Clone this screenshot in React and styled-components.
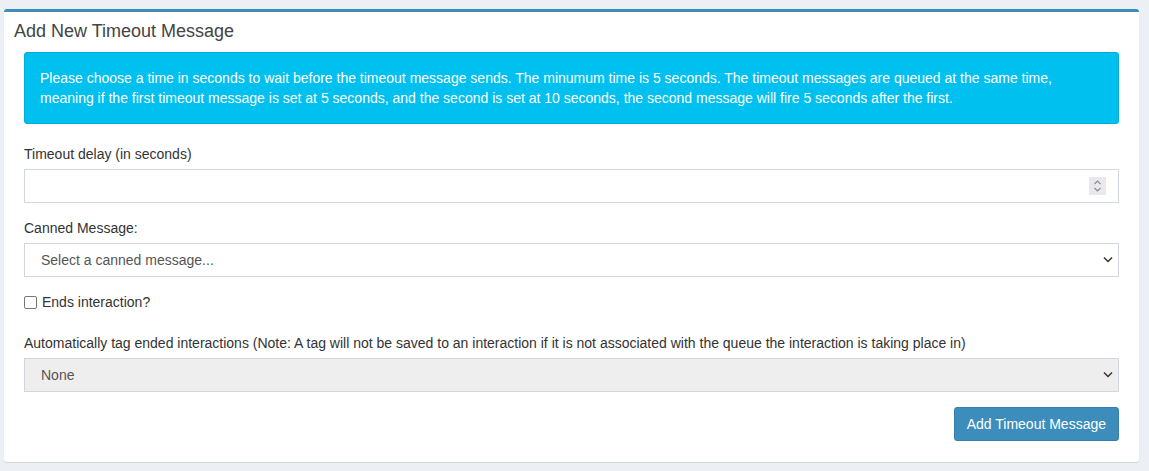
import React, { useState } from "react";
import styled, { createGlobalStyle } from "styled-components";

const GlobalStyle = createGlobalStyle`
	html, body {
		margin: 0;
		padding: 0;
		background: #ecf0f5;
	}
	body {
		font-family: "Liberation Sans", Arial, sans-serif;
		font-size: 14px;
		color: #333;
	}
`;

const Page = styled.div`
	padding: 9px 10px 9px 4px;
`;

const Box = styled.div`
	background: #fff;
	border-top: 3px solid #3c8dbc;
	border-radius: 3px;
	box-shadow: 0 1px 1px rgba(0, 0, 0, 0.1);
`;

const BoxHeader = styled.div`
	padding: 10px 10px 0 10px;
`;

const Title = styled.h3`
	margin: 0;
	font-size: 18px;
	line-height: 18px;
	font-weight: normal;
	color: #444;
`;

const BoxBody = styled.div`
	padding: 12px 20px 21px 20px;
`;

const Alert = styled.div`
	background: #00c0ef;
	border: 1px solid #00acd6;
	border-radius: 3px;
	color: #fff;
	padding: 15px;
	line-height: 20px;
	margin-bottom: 20px;
`;

const FormGroup = styled.div`
	margin-bottom: ${props => props.$mb || 15}px;
`;

const Label = styled.label`
	display: block;
	line-height: 20px;
	margin-bottom: 5px;
`;

const Field = styled.div`
	position: relative;
`;

const Input = styled.input`
	box-sizing: border-box;
	display: block;
	width: 100%;
	height: 34px;
	border: 1px solid #d2d6de;
	border-radius: 0;
	padding: 6px 12px;
	font-family: inherit;
	font-size: 14px;
	color: #555;
	background: #fff;
	outline: none;
	-moz-appearance: textfield;
	&::-webkit-inner-spin-button,
	&::-webkit-outer-spin-button {
		-webkit-appearance: none;
		margin: 0;
	}
`;

const Spinner = styled.div`
	position: absolute;
	right: 13px;
	top: 8px;
	width: 17px;
	height: 18px;
	background: #e9e9ed;
	display: flex;
	align-items: center;
	justify-content: center;
	pointer-events: none;
`;

const Select = styled.select`
	box-sizing: border-box;
	display: block;
	width: 100%;
	height: 34px;
	border: 1px solid #d2d6de;
	border-radius: 0;
	padding: 6px 30px 6px 16px;
	font-family: inherit;
	font-size: 14px;
	color: #555;
	background: ${props => (props.$muted ? "#eeeeee" : "#fff")};
	appearance: none;
	-webkit-appearance: none;
	outline: none;
`;

const Chevron = styled.svg`
	position: absolute;
	right: 6px;
	top: 13px;
	pointer-events: none;
`;

const CheckRow = styled.label`
	display: flex;
	align-items: center;
	line-height: 20px;
	margin-bottom: 21px;
`;

const Checkbox = styled.input`
	box-sizing: border-box;
	appearance: none;
	-webkit-appearance: none;
	width: 13px;
	height: 13px;
	margin: 0 5px 0 0;
	border: 1px solid #767676;
	border-radius: 2px;
	background: #fff;
`;

const Actions = styled.div`
	display: flex;
	justify-content: flex-end;
`;

const Button = styled.button`
	height: 34px;
	padding: 6px 12px;
	background: #3c8dbc;
	border: 1px solid #367fa9;
	border-radius: 3px;
	color: #fff;
	font-family: inherit;
	font-size: 14px;
	line-height: 20px;
	cursor: pointer;
`;

const SelectChevron = () => (
	<Chevron width="10" height="7" viewBox="0 0 10 7">
		<path d="M1 1.5 L5 5.5 L9 1.5" fill="none" stroke="#333" strokeWidth="1.5" />
	</Chevron>
);

const App = () => {
	const [delay, setDelay] = useState("");

	return (
		<>
			<GlobalStyle />
			<Page>
				<Box>
					<BoxHeader>
						<Title>Add New Timeout Message</Title>
					</BoxHeader>
					<BoxBody>
						<Alert>
							Please choose a time in seconds to wait before the timeout message sends. The minumum time is 5 seconds. The
							timeout messages are queued at the same time, meaning if the first timeout message is set at 5 seconds, and
							the second is set at 10 seconds, the second message will fire 5 seconds after the first.
						</Alert>

						<FormGroup>
							<Label>Timeout delay (in seconds)</Label>
							<Field>
								<Input type="number" value={delay} onChange={e => setDelay(e.target.value)} />
								<Spinner>
									<svg width="9" height="14" viewBox="0 0 9 14">
										<path d="M1.5 5 L4.5 2 L7.5 5" fill="none" stroke="#8a8a8e" strokeWidth="1.1" />
										<path d="M1.5 9 L4.5 12 L7.5 9" fill="none" stroke="#8a8a8e" strokeWidth="1.1" />
									</svg>
								</Spinner>
							</Field>
						</FormGroup>

						<FormGroup>
							<Label>Canned Message:</Label>
							<Field>
								<Select defaultValue="">
									<option value="">Select a canned message...</option>
								</Select>
								<SelectChevron />
							</Field>
						</FormGroup>

						<CheckRow>
							<Checkbox type="checkbox" />
							Ends interaction?
						</CheckRow>

						<FormGroup>
							<Label>
								Automatically tag ended interactions (Note: A tag will not be saved to an interaction if it is not
								associated with the queue the interaction is taking place in)
							</Label>
							<Field>
								<Select $muted defaultValue="none">
									<option value="none">None</option>
								</Select>
								<SelectChevron />
							</Field>
						</FormGroup>

						<Actions>
							<Button>Add Timeout Message</Button>
						</Actions>
					</BoxBody>
				</Box>
			</Page>
		</>
	);
};

export default App;
